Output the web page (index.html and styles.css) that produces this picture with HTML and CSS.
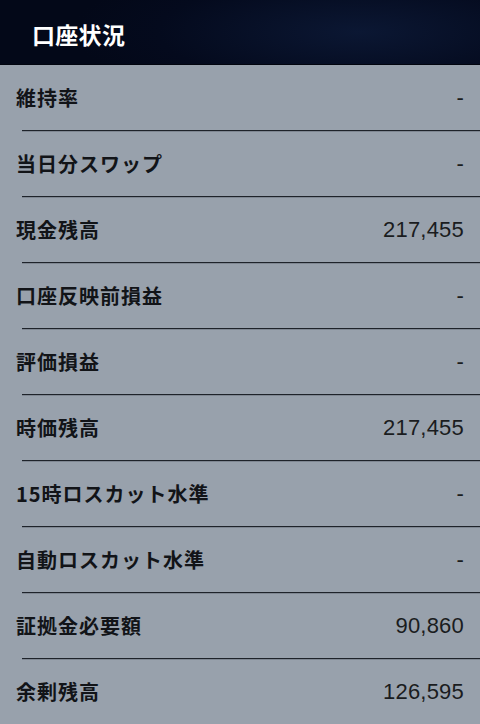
FILE: index.html
```html
<!DOCTYPE html>
<html lang="ja">
<head>
<meta charset="utf-8">
<link rel="stylesheet" href="styles.css">
</head>
<body>
<header class="header"><h1 class="title">口座状況</h1></header>
<main class="list">
  <div class="row"><span class="label">維持率</span><span class="value">-</span></div>
  <div class="sep"></div>
  <div class="row"><span class="label">当日分スワップ</span><span class="value">-</span></div>
  <div class="sep"></div>
  <div class="row"><span class="label">現金残高</span><span class="value">217,455</span></div>
  <div class="sep"></div>
  <div class="row"><span class="label">口座反映前損益</span><span class="value">-</span></div>
  <div class="sep"></div>
  <div class="row"><span class="label">評価損益</span><span class="value">-</span></div>
  <div class="sep"></div>
  <div class="row"><span class="label">時価残高</span><span class="value">217,455</span></div>
  <div class="sep"></div>
  <div class="row"><span class="label">15時ロスカット水準</span><span class="value">-</span></div>
  <div class="sep"></div>
  <div class="row"><span class="label">自動ロスカット水準</span><span class="value">-</span></div>
  <div class="sep"></div>
  <div class="row"><span class="label">証拠金必要額</span><span class="value">90,860</span></div>
  <div class="sep"></div>
  <div class="row"><span class="label">余剰残高</span><span class="value">126,595</span></div>
</main>
</body>
</html>
```
FILE: styles.css
```css
html, body {
  margin: 0;
  padding: 0;
  height: 100%;
  background: #98a1ac;
  font-family: "Noto Sans CJK JP", "Noto Sans", sans-serif;
}
.header {
  border-bottom: 1px solid #02050f;
  background: radial-gradient(ellipse 60% 120% at 75% 50%, #0b1733 0%, #040a1d 70%, #030818 100%);
  display: flex;
  align-items: center;
  padding-left: 32px;
  box-sizing: border-box;
  height: 65px;
}
.title {
  margin: 0;
  color: #ffffff;
  font-size: 23px;
  font-weight: 700;
  letter-spacing: 0.3px;
  line-height: 1;
  padding-top: 4px;
}
.list {
  display: flex;
  flex-direction: column;
}
.row {
  height: 65px;
  display: flex;
  align-items: center;
  justify-content: space-between;
  padding: 0 16px;
}
.label {
  color: #121418;
  font-size: 20px;
  font-weight: 700;
  letter-spacing: 1px;
  line-height: 1;
}
.value {
  color: #1a1c20;
  font-family: "Liberation Sans", Arial, sans-serif;
  font-size: 22px;
  letter-spacing: 0.2px;
  line-height: 1;
}
.sep {
  height: 1px;
  margin-left: 22px;
  background: #1e232a;
  box-shadow: 0 1px 0 #7f8792;
}
```
